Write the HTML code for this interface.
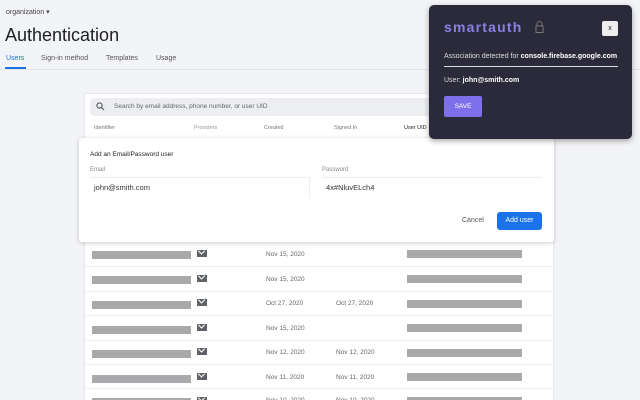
<!DOCTYPE html>
<html><head><style>
*{margin:0;padding:0;box-sizing:border-box}
html,body{width:640px;height:400px;overflow:hidden}
body{background:#f3f4f7;font-family:"Liberation Sans",sans-serif;position:relative;color:#333}
.abs{position:absolute}
.t{font-size:7px;color:#555}
.bar{position:absolute;height:8px;background:#a9a9ab}
.mail{position:absolute;width:10px;height:7px;background:#5f6368}
.mail:after{content:"";position:absolute;left:2px;top:0;width:4px;height:4px;border-right:1.2px solid #fff;border-bottom:1.2px solid #fff;transform:rotate(45deg) translate(-1px,-1px)}
.date{position:absolute;font-size:6.5px;color:#666}
</style></head><body>
<div class="abs" style="left:6px;top:8px;font-size:7px;color:#444">organization ▾</div>
<div class="abs" style="left:5px;top:25px;font-size:18px;color:#202124">Authentication</div>
<div class="abs" style="left:6px;top:55px;font-size:7px;color:#1a73e8">Users</div>
<div class="abs" style="left:5px;top:67px;width:21px;height:2px;background:#1a73e8"></div>
<div class="abs t" style="left:41px;top:55px">Sign-in method</div>
<div class="abs t" style="left:106px;top:55px">Templates</div>
<div class="abs t" style="left:156px;top:55px">Usage</div>
<div class="abs" style="left:0;top:69px;width:640px;height:1px;background:#e2e3e6"></div>

<div class="abs" style="left:85px;top:94px;width:468px;height:306px;background:#fff;box-shadow:0 0 2px rgba(0,0,0,.15)"></div>
<div class="abs" style="left:90px;top:98px;width:350px;height:18px;background:#eceef1;border-radius:5px"></div>
<svg class="abs" style="left:96px;top:102px" width="9" height="9" viewBox="0 0 9 9"><circle cx="3.5" cy="3.5" r="2.6" fill="none" stroke="#555" stroke-width="1.1"/><path d="M5.5 5.5L8 8" stroke="#555" stroke-width="1.2"/></svg>
<div class="abs" style="left:114px;top:103px;font-size:6.5px;color:#666">Search by email address, phone number, or user UID</div>
<div class="abs" style="left:94px;top:125px;font-size:5.5px;color:#777">Identifier</div>
<div class="abs" style="left:194px;top:125px;font-size:5.5px;color:#999">Providers</div>
<div class="abs" style="left:264px;top:125px;font-size:5.5px;color:#777">Created</div>
<div class="abs" style="left:334px;top:125px;font-size:5.5px;color:#777">Signed In</div>
<div class="abs" style="left:404px;top:125px;font-size:5.5px;color:#222">User UID</div>

<div class="bar" style="left:92px;top:251px;width:99px"></div><div class="mail" style="left:197px;top:250px"></div><div class="date" style="left:266px;top:251px">Nov 15, 2020</div><div class="bar" style="left:407px;top:250px;width:115px"></div>
<div class="abs" style="left:85px;top:266px;width:468px;height:1px;background:#eee"></div>
<div class="bar" style="left:92px;top:276px;width:99px"></div><div class="mail" style="left:197px;top:275px"></div><div class="date" style="left:266px;top:276px">Nov 15, 2020</div><div class="bar" style="left:407px;top:275px;width:115px"></div>
<div class="abs" style="left:85px;top:291px;width:468px;height:1px;background:#eee"></div>
<div class="bar" style="left:92px;top:301px;width:99px"></div><div class="mail" style="left:197px;top:299px"></div><div class="date" style="left:266px;top:300px">Oct 27, 2020</div><div class="date" style="left:336px;top:300px">Oct 27, 2020</div><div class="bar" style="left:407px;top:300px;width:115px"></div>
<div class="abs" style="left:85px;top:315px;width:468px;height:1px;background:#eee"></div>
<div class="bar" style="left:92px;top:326px;width:99px"></div><div class="mail" style="left:197px;top:324px"></div><div class="date" style="left:266px;top:325px">Nov 15, 2020</div><div class="bar" style="left:407px;top:324px;width:115px"></div>
<div class="abs" style="left:85px;top:340px;width:468px;height:1px;background:#eee"></div>
<div class="bar" style="left:92px;top:350px;width:99px"></div><div class="mail" style="left:197px;top:348px"></div><div class="date" style="left:266px;top:349px">Nov 12, 2020</div><div class="date" style="left:336px;top:349px">Nov 12, 2020</div><div class="bar" style="left:407px;top:349px;width:115px"></div>
<div class="abs" style="left:85px;top:364px;width:468px;height:1px;background:#eee"></div>
<div class="bar" style="left:92px;top:375px;width:99px"></div><div class="mail" style="left:197px;top:373px"></div><div class="date" style="left:266px;top:374px">Nov 11, 2020</div><div class="date" style="left:336px;top:374px">Nov 11, 2020</div><div class="bar" style="left:407px;top:373px;width:115px"></div>
<div class="abs" style="left:85px;top:388px;width:468px;height:1px;background:#eee"></div>
<div class="bar" style="left:92px;top:398px;width:99px"></div><div class="mail" style="left:197px;top:397px"></div><div class="date" style="left:266px;top:397px">Nov 10, 2020</div><div class="date" style="left:336px;top:397px">Nov 10, 2020</div><div class="bar" style="left:407px;top:397px;width:115px"></div>

<div class="abs" style="left:79px;top:138px;width:475px;height:104px;background:#fff;border-radius:3px;box-shadow:0 1px 5px rgba(0,0,0,.2)"></div>
<div class="abs" style="left:90px;top:151px;font-size:6.5px;color:#222">Add an Email/Password user</div>
<div class="abs" style="left:90px;top:167px;font-size:6px;color:#888">Email</div>
<div class="abs" style="left:90px;top:177px;width:220px;height:21px;border-top:1px solid #eee;border-right:1px solid #eee"></div>
<div class="abs" style="left:94px;top:183px;font-size:7.5px;color:#333">john@smith.com</div>
<div class="abs" style="left:322px;top:167px;font-size:6px;color:#888">Password</div>
<div class="abs" style="left:322px;top:177px;width:220px;height:21px;border-top:1px solid #eee"></div>
<div class="abs" style="left:326px;top:183px;font-size:7.5px;color:#333">4x#NluvELch4</div>
<div class="abs" style="left:462px;top:217px;font-size:7px;color:#555">Cancel</div>
<div class="abs" style="left:497px;top:212px;width:45px;height:18px;background:#1a73e8;border-radius:3px;color:#fff;font-size:7px;text-align:center;line-height:18px">Add user</div>

<div class="abs" style="left:429px;top:5px;width:203px;height:134px;background:#2b2a3a;border-radius:5px;box-shadow:0 2px 6px rgba(0,0,0,.35)"></div>
<div class="abs" style="left:444px;top:19px;font-size:14px;font-weight:bold;color:#8b80e8;letter-spacing:1.2px">smartauth</div>
<svg class="abs" style="left:535px;top:21px" width="9" height="12" viewBox="0 0 9 12"><path d="M2 5V3a2.5 2.5 0 0 1 5 0v2" fill="none" stroke="#777" stroke-width="1"/><rect x="1" y="5" width="7" height="6.5" fill="none" stroke="#777" stroke-width="1"/></svg>
<div class="abs" style="left:602px;top:21px;width:16px;height:15px;background:#eee;border-radius:2px;font-size:7px;color:#222;text-align:center;line-height:15px">x</div>
<div class="abs" style="left:444px;top:53px;font-size:7px;color:#ddd;white-space:nowrap">Association detected for <b style="color:#fff">console.firebase.google.com</b></div>
<div class="abs" style="left:444px;top:66px;width:174px;height:1px;background:#ddd"></div>
<div class="abs" style="left:444px;top:77px;font-size:7px;color:#ddd">User: <b style="color:#fff">john@smith.com</b></div>
<div class="abs" style="left:444px;top:96px;width:38px;height:21px;background:#7e70ea;border-radius:2px;color:#fff;font-size:6.5px;text-align:center;line-height:21px">SAVE</div>
</body></html>
